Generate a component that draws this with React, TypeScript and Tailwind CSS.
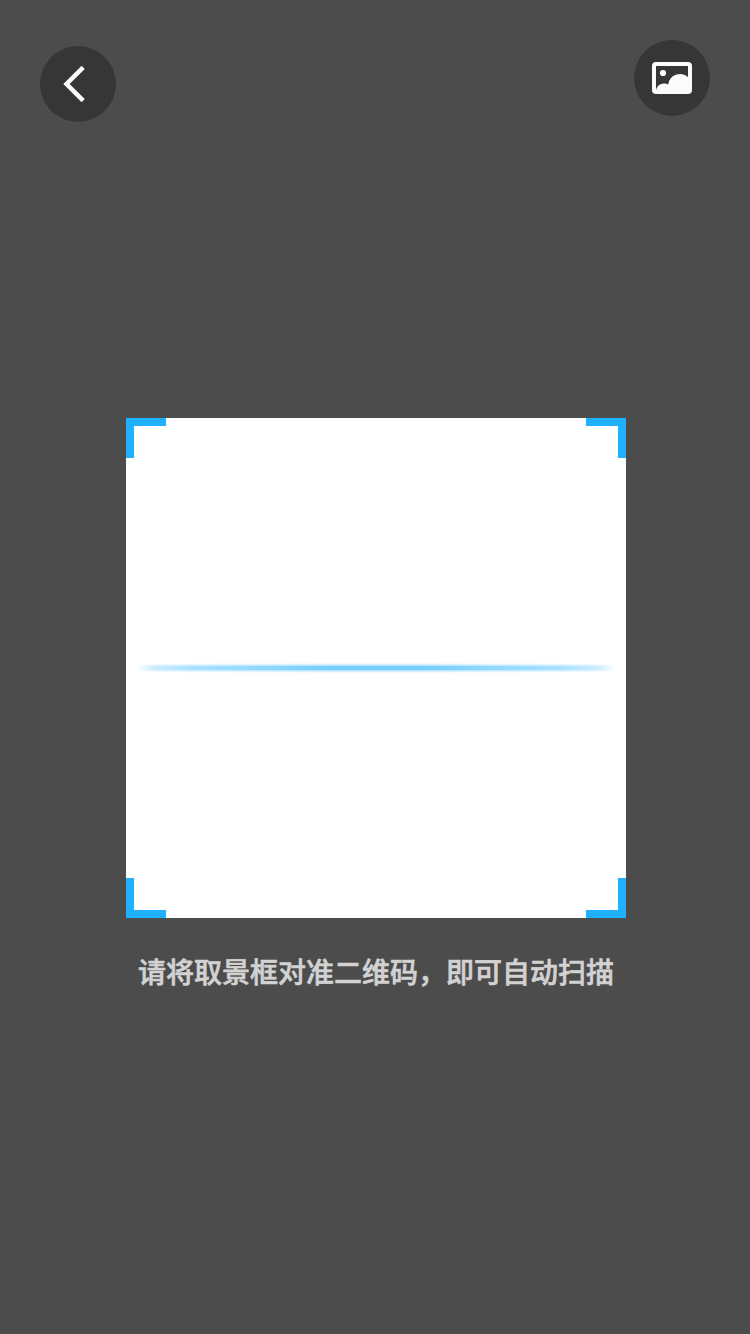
function BackIcon() {
  return (
    <svg width="76" height="76" viewBox="0 0 76 76" fill="none">
      <path d="M43.2 21.3 26.5 38 43.2 54.7" stroke="#fbfbfb" strokeWidth="4.5" />
    </svg>
  );
}

function AlbumIcon() {
  return (
    <svg width="40" height="32" viewBox="0 0 40 32" fill="#fbfbfb">
      <path
        fillRule="evenodd"
        d="M4 0H36A4 4 0 0 1 40 4V28A4 4 0 0 1 36 32H4A4 4 0 0 1 0 28V4A4 4 0 0 1 4 0ZM4 4V28.5A8 8 0 0 1 16.2 22.6A12 12 0 0 1 36 15V4Z"
      />
      <circle cx="11" cy="11" r="3.1" />
    </svg>
  );
}

function ScanFrame() {
  return (
    <div className="relative flex h-[500px] w-[500px] items-center justify-center bg-white">
      <span className="absolute left-0 top-0 h-10 w-10 border-l-8 border-t-8 border-[#1fb0ff]" />
      <span className="absolute right-0 top-0 h-10 w-10 border-r-8 border-t-8 border-[#1fb0ff]" />
      <span className="absolute bottom-0 left-0 h-10 w-10 border-b-8 border-l-8 border-[#1fb0ff]" />
      <span className="absolute bottom-0 right-0 h-10 w-10 border-b-8 border-r-8 border-[#1fb0ff]" />
      <svg width="484" height="16" viewBox="0 0 484 16">
        <defs>
          <linearGradient id="beam" x1="0" x2="1" y1="0" y2="0">
            <stop offset="0" stopColor="#1fb0ff" stopOpacity="0" />
            <stop offset="0.04" stopColor="#1fb0ff" stopOpacity="0.24" />
            <stop offset="0.12" stopColor="#1fb0ff" stopOpacity="0.38" />
            <stop offset="0.4" stopColor="#1fb0ff" stopOpacity="0.61" />
            <stop offset="0.6" stopColor="#1fb0ff" stopOpacity="0.61" />
            <stop offset="0.88" stopColor="#1fb0ff" stopOpacity="0.38" />
            <stop offset="0.96" stopColor="#1fb0ff" stopOpacity="0.24" />
            <stop offset="1" stopColor="#1fb0ff" stopOpacity="0" />
          </linearGradient>
        </defs>
        <g fill="url(#beam)">
          <rect x="2" y="6" width="480" height="4" />
          <rect x="2" y="5" width="480" height="1" opacity="0.55" />
          <rect x="2" y="10" width="480" height="1" opacity="0.55" />
          <rect x="2" y="4" width="480" height="1" opacity="0.3" />
          <rect x="2" y="11" width="480" height="1" opacity="0.3" />
          <rect x="2" y="3" width="480" height="1" opacity="0.08" />
          <rect x="2" y="12" width="480" height="1" opacity="0.08" />
        </g>
      </svg>
    </div>
  );
}

export default function App() {
  return (
    <div className="flex h-[1334px] w-[750px] flex-col bg-[#4c4c4c] font-['Noto_Sans_CJK_SC',sans-serif]">
      <header className="flex h-[418px] items-start justify-between px-10 pt-10">
        <button aria-label="返回" className="mt-1.5 flex h-[76px] w-[76px] items-center justify-center rounded-full bg-[#363636]">
          <BackIcon />
        </button>
        <button aria-label="相册" className="flex h-[76px] w-[76px] items-center justify-center rounded-full bg-[#363636]">
          <AlbumIcon />
        </button>
      </header>
      <main className="flex flex-col items-center pl-0.5">
        <ScanFrame />
        <p className="mt-[33px] whitespace-nowrap text-[28px] font-medium leading-10 text-[#d2d2d2] [-webkit-text-stroke:0.6px_#d2d2d2]">
          请将取景框对准二维码，即可自动扫描
        </p>
      </main>
    </div>
  );
}
